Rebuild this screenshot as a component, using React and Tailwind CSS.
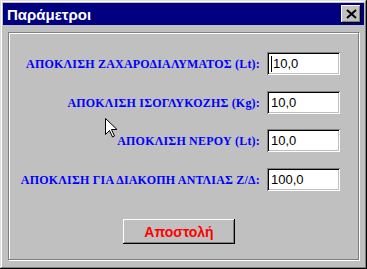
import React from 'react';

// Classic 3D bevels
const raised = 'shadow-[inset_-1px_-1px_0_#000,inset_1px_1px_0_#fff,inset_-2px_-2px_0_#808080]';
const sunken = 'shadow-[inset_1px_1px_0_#808080,inset_-1px_-1px_0_#fff,inset_2px_2px_0_#000,inset_-2px_-2px_0_#c0c0c0]';

const rows = [
    { label: 'ΑΠΟΚΛΙΣΗ ΖΑΧΑΡΟΔΙΑΛΥΜΑΤΟΣ (Lt):', value: '10,0', mt: 'mt-[19px]', caret: true },
    { label: 'ΑΠΟΚΛΙΣΗ ΙΣΟΓΛΥΚΟΖΗΣ (Kg):', value: '10,0', mt: 'mt-[16px]' },
    { label: 'ΑΠΟΚΛΙΣΗ ΝΕΡΟΥ (Lt):', value: '10,0', mt: 'mt-[15px]' },
    { label: 'ΑΠΟΚΛΙΣΗ ΓΙΑ ΔΙΑΚΟΠΗ ΑΝΤΛΙΑΣ Ζ/Δ:', value: '100,0', mt: 'mt-[16px]' },
];

const Field = ({ label, value, mt, caret }) => (
    <div className={`flex items-center justify-end h-[23px] ${mt}`}>
        <span className="font-['Liberation_Serif',serif] font-bold text-[12px] tracking-[0.2px] text-[#0000ff] whitespace-nowrap mr-[7px]">
            {label}
        </span>
        <div className={`w-[73px] h-[23px] bg-white flex items-center pl-[4px] ${sunken}`}>
            {caret && <span className="w-[1px] h-[16px] bg-black mr-[1px]" />}
            <span className="font-['Liberation_Sans',sans-serif] text-[13px] text-black leading-none">{value}</span>
        </div>
    </div>
);

export default function App() {
    return (
        <div className="relative w-[367px] h-[269px] bg-[#c0c0c0] p-[3px] shadow-[inset_-1px_-1px_0_#000,inset_1px_1px_0_#dfdfdf,inset_-2px_-2px_0_#808080,inset_2px_2px_0_#fff] select-none">
            {/* Title bar */}
            <div className="h-[22px] bg-[#000080] flex items-center justify-between pl-[4px] pr-[3px]">
                <span className="font-['Liberation_Sans',sans-serif] font-bold text-[15px] text-white leading-none">
                    Παράμετροι
                </span>
                <div className={`w-[20px] h-[18px] bg-[#c0c0c0] flex items-center justify-center ${raised}`}>
                    <svg width="11" height="10" viewBox="0 0 11 10">
                        <path d="M1 1l9 8M10 1l-9 8" stroke="#000" strokeWidth="2" />
                    </svg>
                </div>
            </div>

            {/* Group box */}
            <div className="ml-[5px] mt-[7px] w-[351px] h-[228px] border border-[#808080] shadow-[1px_1px_0_#fff,inset_1px_1px_0_#fff] pr-[18px]">
                {rows.map((r) => <Field key={r.label} {...r} />)}
                <div className="mt-[28px] pl-[114px]">
                    <div className={`w-[112px] h-[25px] flex items-center justify-center ${raised}`}>
                        <span className="font-['Liberation_Sans',sans-serif] font-bold text-[14px] text-[#ff0000] leading-none">
                            Αποστολή
                        </span>
                    </div>
                </div>
            </div>

            {/* Mouse pointer */}
            <svg className="absolute left-[105px] top-[118px]" width="12" height="20" viewBox="0 0 12 20">
                <path d="M0.5 0.5v16l4-4 3 6.5 2-1-3-6.5h5.5z" fill="#fff" stroke="#000" strokeWidth="1" />
            </svg>
        </div>
    );
}
